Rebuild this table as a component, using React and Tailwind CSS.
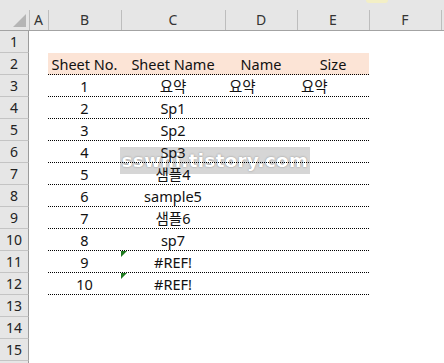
import React from "react";

const font = { fontFamily: '"Noto Sans", "Noto Sans CJK KR", sans-serif' };

// column letters + widths (px) as in the sheet
const columns = [
  { label: "A", cls: "w-[19px]" },
  { label: "B", cls: "w-[73px]" },
  { label: "C", cls: "w-[104px]" },
  { label: "D", cls: "w-[72px]" },
  { label: "E", cls: "w-[72px]" },
  { label: "F", cls: "w-[72px]" },
  { label: "", cls: "w-[3px]" },
];

const rows = [
  { no: "1", name: "요약", d: "요약", e: "요약" },
  { no: "2", name: "Sp1" },
  { no: "3", name: "Sp2" },
  { no: "4", name: "Sp3" },
  { no: "5", name: "샘플4" },
  { no: "6", name: "sample5" },
  { no: "7", name: "샘플6" },
  { no: "8", name: "sp7" },
  { no: "9", name: "#REF!", warn: true },
  { no: "10", name: "#REF!", warn: true },
];

const GreenFlag = () => (
  <svg width="6" height="6" viewBox="0 0 6 6" className="absolute left-0 top-0">
    <polygon points="0,0 6,0 0,6" fill="#1f7a1f" />
  </svg>
);

const RowHead = ({ n }) => (
  <div className="w-[29px] h-full shrink-0 flex items-center justify-center bg-[#e6e6e6] border-r border-r-[#9b9b9b] border-b border-b-[#c4c4c4] text-[14px] text-[#222]">
    {n}
  </div>
);

const Blank = ({ n }) => (
  <div className="flex h-[22px]">
    <RowHead n={n} />
    <div className="flex-1" />
  </div>
);

export default function App() {
  return (
    <div className="relative w-[444px] h-[363px] overflow-hidden bg-white text-[#111]" style={font}>
      {/* ribbon remnant at top edge */}
      <div className="absolute left-[366px] -top-[3px] w-[22px] h-[6px] rounded-full bg-[#f3efc6]" />

      {/* column header */}
      <div className="flex h-[31px] bg-[#e6e6e6] border-b border-b-[#a3a3a3]">
        <div className="relative w-[29px] shrink-0">
          <svg width="29" height="30" viewBox="0 0 29 30" className="absolute left-0 top-0">
            <polygon points="26,14 26,27 13,27" fill="#b5b5b5" />
          </svg>
        </div>
        {columns.map((c, i) => (
          <div key={i} className={`${c.cls} shrink-0 relative flex items-center justify-center pt-[8px] text-[14px] text-[#333]`}>
            <span className="absolute left-0 top-[10px] bottom-0 w-px bg-[#bdbdbd]" />
            {c.label}
          </div>
        ))}
      </div>

      {/* watermark, sits behind the cell content */}
      <div className="absolute left-[120px] top-[147px] w-[190px] h-[27px] bg-[#d6d6d6] flex items-center justify-center">
        <span
          className="text-[18px] font-bold text-white tracking-[0.5px] [text-shadow:0_0_2px_#8a8a8a]"
          style={{ fontFamily: '"DejaVu Sans", sans-serif' }}
        >
          sswhi.tistory.com
        </span>
      </div>

      <div className="relative text-[14.5px] leading-[20px]">
        <Blank n="1" />

        {/* table header */}
        <div className="flex h-[22px]">
          <RowHead n="2" />
          <div className="w-[19px] shrink-0" />
          <div className="flex bg-[#fce4d6] border-b border-dotted border-b-black">
            <div className="w-[73px] flex items-end justify-center">Sheet No.</div>
            <div className="w-[104px] flex items-end justify-center">Sheet Name</div>
            <div className="w-[72px] flex items-end justify-center">Name</div>
            <div className="w-[72px] flex items-end justify-center">Size</div>
          </div>
        </div>

        {rows.map((r, i) => (
          <div key={r.no} className="flex h-[22px]">
            <RowHead n={String(i + 3)} />
            <div className="w-[19px] shrink-0" />
            <div className="flex border-b border-dotted border-b-black">
              <div className="w-[73px] flex items-end justify-center">{r.no}</div>
              <div className="relative w-[104px] flex items-end justify-center">
                {r.warn && <GreenFlag />}
                {r.name}
              </div>
              <div className="w-[72px] flex items-end pl-[4px]">{r.d}</div>
              <div className="w-[72px] flex items-end pl-[4px]">{r.e}</div>
            </div>
          </div>
        ))}

        <Blank n="13" />
        <Blank n="14" />
        <Blank n="15" />
        <Blank n="" />
      </div>
    </div>
  );
}
